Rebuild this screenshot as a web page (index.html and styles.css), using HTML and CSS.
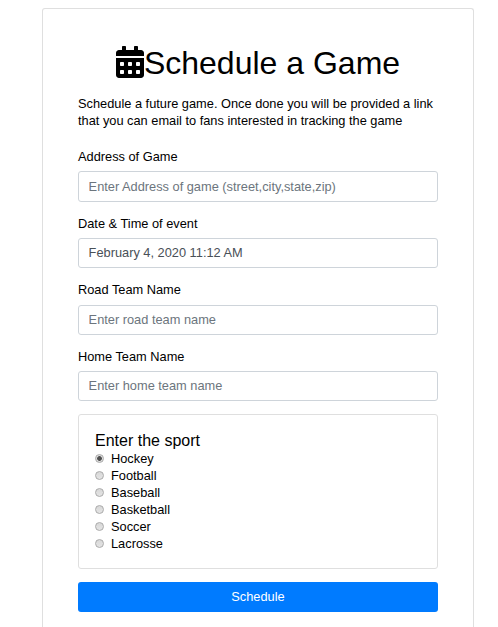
FILE: index.html
```html
<!DOCTYPE html>
<html lang="en">
<head>
<meta charset="utf-8">
<title>Schedule a Game</title>
<link rel="stylesheet" href="styles.css">
</head>
<body>
<main class="card">
  <h1 class="title"><svg class="icon" viewBox="0 0 448 512" aria-hidden="true"><path d="M0 464c0 26.5 21.5 48 48 48h352c26.5 0 48-21.500 48-48V192H0v272zm320-196c0-6.600 5.400-12 12-12h40c6.600 0 12 5.400 12 12v40c0 6.600-5.400 12-12 12h-40c-6.600 0-12-5.400-12-12v-40zm0 128c0-6.600 5.400-12 12-12h40c6.600 0 12 5.400 12 12v40c0 6.600-5.400 12-12 12h-40c-6.600 0-12-5.400-12-12v-40zM192 268c0-6.600 5.400-12 12-12h40c6.600 0 12 5.400 12 12v40c0 6.600-5.400 12-12 12h-40c-6.600 0-12-5.400-12-12v-40zm0 128c0-6.600 5.400-12 12-12h40c6.600 0 12 5.400 12 12v40c0 6.600-5.400 12-12 12h-40c-6.600 0-12-5.400-12-12v-40zM64 268c0-6.600 5.400-12 12-12h40c6.600 0 12 5.400 12 12v40c0 6.600-5.400 12-12 12H76c-6.600 0-12-5.400-12-12v-40zm0 128c0-6.600 5.400-12 12-12h40c6.600 0 12 5.400 12 12v40c0 6.600-5.400 12-12 12H76c-6.600 0-12-5.400-12-12v-40zM400 64h-48V16c0-8.800-7.200-16-16-16h-32c-8.800 0-16 7.200-16 16v48H160V16c0-8.800-7.200-16-16-16h-32c-8.800 0-16 7.200-16 16v48H48C21.500 64 0 85.500 0 112v48h448v-48c0-26.500-21.500-48-48-48z"/></svg><span>Schedule a Game</span></h1>
  <p class="intro">Schedule a future game. Once done you will be provided a link<br>that you can email to fans interested in tracking the game</p>
  <form>
    <div class="field tall">
      <label for="address">Address of Game</label>
      <input id="address" type="text" placeholder="Enter Address of game (street,city,state,zip)">
    </div>
    <div class="field short">
      <label for="date">Date &amp; Time of event</label>
      <input id="date" type="text" value="February 4, 2020 11:12 AM">
    </div>
    <div class="field spaced">
      <label for="road">Road Team Name</label>
      <input id="road" type="text" placeholder="Enter road team name">
    </div>
    <div class="field short">
      <label for="home">Home Team Name</label>
      <input id="home" type="text" placeholder="Enter home team name">
    </div>
    <section class="sports">
      <h2>Enter the sport</h2>
      <label><input type="radio" name="sport" checked>Hockey</label>
      <label><input type="radio" name="sport">Football</label>
      <label><input type="radio" name="sport">Baseball</label>
      <label><input type="radio" name="sport">Basketball</label>
      <label><input type="radio" name="sport">Soccer</label>
      <label><input type="radio" name="sport">Lacrosse</label>
    </section>
    <button class="submit" type="button">Schedule</button>
  </form>
</main>
</body>
</html>
```

FILE: styles.css
```css
* { box-sizing: border-box; }
body {
  margin: 0;
  padding: 8px 24px 0 42px;
  background: #fff;
  color: #000;
  font: 12.8px/17px "Liberation Sans", Arial, sans-serif;
}
.card {
  height: 619px;
  padding: 35px 35px 0;
  border: 1px solid #dfdfdf;
  border-bottom: 0;
  border-radius: 3px 3px 0 0;
}
.title {
  display: flex;
  justify-content: center;
  align-items: center;
  height: 38px;
  margin: 0 0 13px;
  font-size: 32px;
  font-weight: 400;
  white-space: nowrap;
}
.icon { width: 28px; height: 32px; flex: none; margin-bottom: 2px; }
.intro { margin: 0 0 19px; white-space: nowrap; }
.field { height: 67px; }
.field.short { height: 66px; }
.field label { display: block; height: 23px; }
.field.spaced label { height: 24px; }
.field input {
  display: block;
  width: 100%;
  height: 30px;
  padding: 0 10px 1px 9.600px;
  border: 1px solid #ced4da;
  border-radius: 3px;
  outline: 0;
  background: #fff;
  color: #495057;
  font: inherit;
}
.field.tall input { height: 31px; }
.field input::placeholder { color: #6c757d; opacity: 1; }
.sports {
  height: 155px;
  margin-bottom: 13px;
  padding: 16px;
  border: 1px solid #dfdfdf;
  border-radius: 3px;
}
.sports h2 {
  margin: 0;
  font-size: 16px;
  font-weight: 400;
  line-height: 19px;
}
.sports label { display: flex; align-items: center; height: 17px; }
.sports input {
  appearance: none;
  width: 9px;
  height: 9px;
  margin: 0 7px 0 0;
  border: 1px solid #aaa;
  border-radius: 50%;
  background: linear-gradient(#d8d8d8, #e4e4e4);
}
.sports input:checked { background: radial-gradient(circle, #505050 0 2px, #dedede 2.700px); }
.submit {
  display: block;
  width: 100%;
  height: 30px;
  padding: 0 0 1px;
  border: 0;
  border-radius: 3px;
  background: #007bff;
  color: #fff;
  font: inherit;
}
```
